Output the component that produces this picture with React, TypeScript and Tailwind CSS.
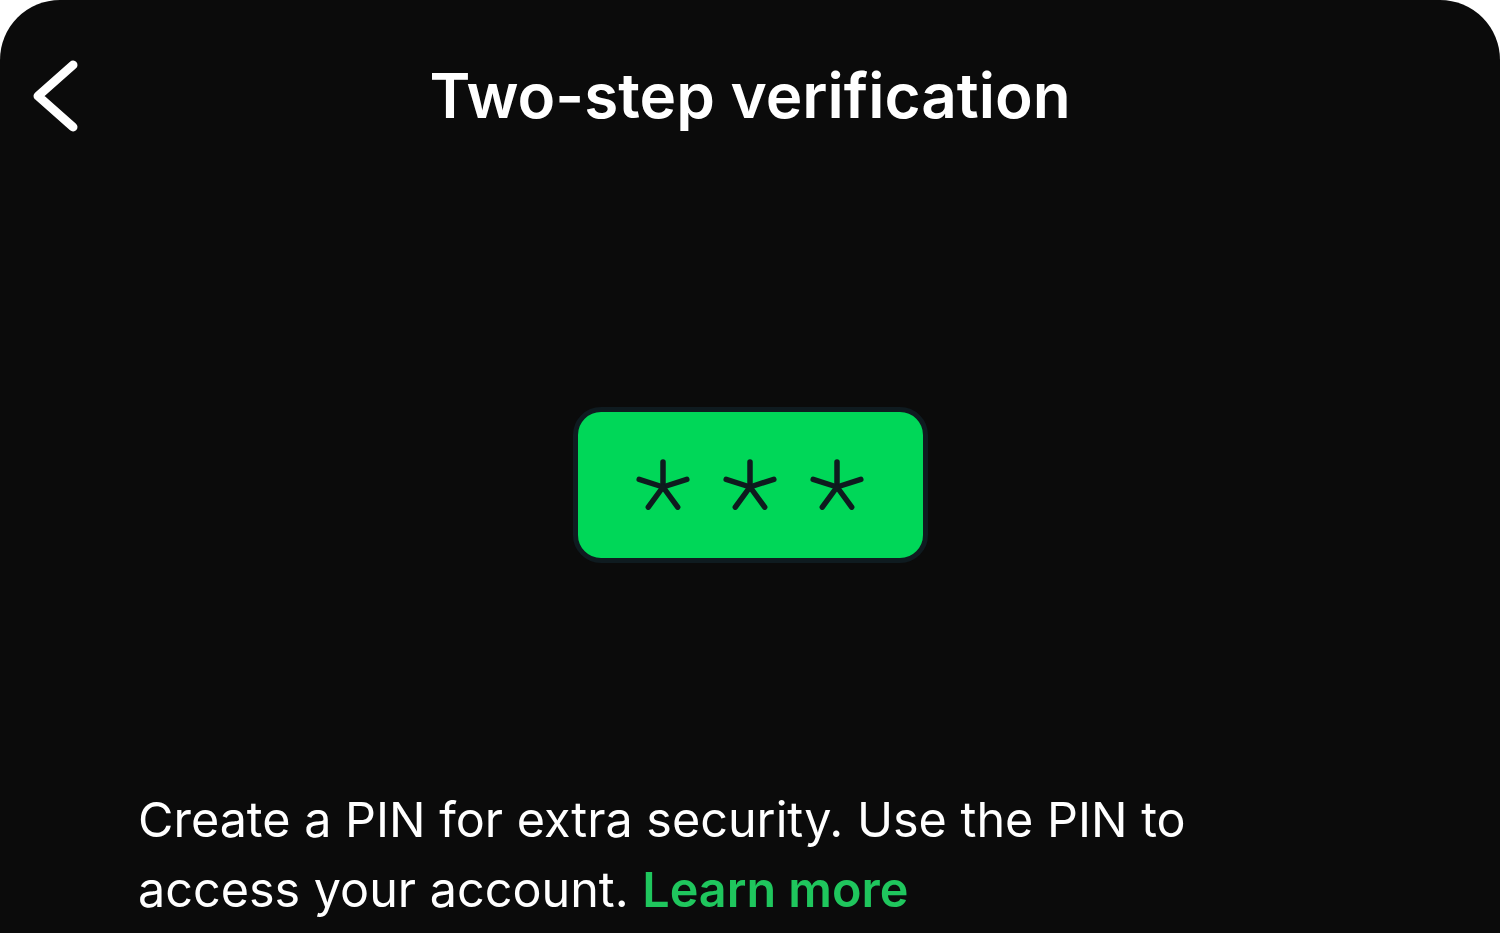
import React from 'react';

const Asterisk: React.FC = () => (
  <svg width="56" height="56" viewBox="-28 -28 56 56" fill="none">
    <g stroke="#0e1b1e" strokeWidth="5.5" strokeLinecap="round">
      <line x1="0" y1="0" x2="0" y2="-25" />
      <line x1="0" y1="0" x2="23.8" y2="-7.7" />
      <line x1="0" y1="0" x2="-23.8" y2="-7.7" />
      <line x1="0" y1="0" x2="14.7" y2="20.2" />
      <line x1="0" y1="0" x2="-14.7" y2="20.2" />
    </g>
  </svg>
);

export default function App() {
  return (
    <div className="w-[1500px] h-[933px] bg-white overflow-hidden">
      <div
        className="h-full bg-[#0b0b0b] rounded-t-[60px] flex flex-col text-white"
        style={{ fontFamily: 'Inter, "Noto Sans", sans-serif' }}
      >
        {/* Header */}
        <div className="flex items-center h-[80px] mt-[56px] px-[25px]">
          <button className="w-[60px] h-[80px] flex items-center">
            <svg width="60" height="80" viewBox="0 0 60 80" fill="none">
              <polyline
                points="48,9 13,40 48,71"
                stroke="white"
                strokeWidth="9"
                strokeLinecap="round"
                strokeLinejoin="round"
              />
            </svg>
          </button>
          <h1 className="flex-1 text-center text-[62px] font-semibold leading-none">
            Two-step verification
          </h1>
          <div className="w-[60px]" />
        </div>

        {/* Illustration */}
        <div className="flex justify-center mt-[271px]">
          <div className="w-[355px] h-[156px] rounded-[28px] border-[5px] border-[#0f1b20] bg-[#00d758] flex items-center justify-center gap-[31px] pt-[4px]">
            <Asterisk />
            <Asterisk />
            <Asterisk />
          </div>
        </div>

        {/* Description */}
        <p className="mt-[222px] pl-[138px] pr-[280px] text-[48.5px] leading-[70px]">
          Create a PIN for extra security. Use the PIN to access your account.{' '}
          <span className="text-[#1fc65d] font-semibold">Learn more</span>
        </p>
      </div>
    </div>
  );
}
